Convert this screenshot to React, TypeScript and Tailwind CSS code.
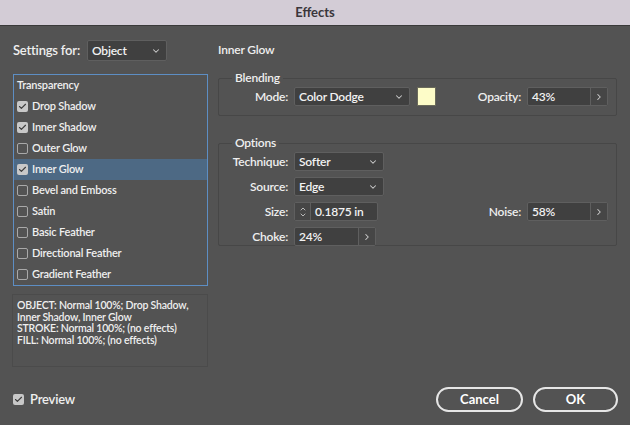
import { ChevronDown, ChevronRight, ChevronUp, Check } from 'lucide-react';

const F = { fontFamily: '"Lato", "Open Sans", sans-serif' };

const effects = [
  { name: 'Drop Shadow', on: true },
  { name: 'Inner Shadow', on: true },
  { name: 'Outer Glow', on: false },
  { name: 'Inner Glow', on: true, sel: true },
  { name: 'Bevel and Emboss', on: false },
  { name: 'Satin', on: false },
  { name: 'Basic Feather', on: false },
  { name: 'Directional Feather', on: false },
  { name: 'Gradient Feather', on: false },
];

function Box({ on }: { on: boolean }) {
  return on ? (
    <span className="w-[11px] h-[11px] rounded-[2px] bg-[#c8c8c8] flex items-center justify-center shrink-0">
      <Check size={9} strokeWidth={3} className="text-[#3c3c3c]" />
    </span>
  ) : (
    <span className="w-[11px] h-[11px] rounded-[2px] border border-[#a9a9a9] shrink-0" />
  );
}

function Select({ value, w, h = 'h-[19px]' }: { value: string; w: string; h?: string }) {
  return (
    <div className={`${w} ${h} bg-[#404040] border border-[#5f5f5f] rounded-[2px] flex items-center justify-between pl-[4px] pr-[5px] text-[12px] text-[#f2f2f2]`}>
      <span>{value}</span>
      <ChevronDown size={10} strokeWidth={2.5} className="text-[#cfcfcf]" />
    </div>
  );
}

function Stepped({ value, w }: { value: string; w: string }) {
  return (
    <div className="h-[19px] flex border border-[#5f5f5f] rounded-[2px] bg-[#404040] text-[12px] text-[#f2f2f2]">
      <div className={`${w} flex items-center pl-[4px]`}>{value}</div>
      <div className="w-[17px] border-l border-[#5f5f5f] bg-[#464646] flex items-center justify-center">
        <ChevronRight size={10} strokeWidth={2.5} className="text-[#d0d0d0]" />
      </div>
    </div>
  );
}

function Label({ children }: { children: string }) {
  return <div className="w-[61px] text-right text-[12px] text-[#efefef] mr-[6px]">{children}</div>;
}

export default function App() {
  return (
    <div className="w-[630px] h-[425px] bg-[#535353] flex flex-col overflow-hidden font-semibold tracking-[-0.2px]" style={F}>
      <div className="h-[26px] bg-[#d3ccd6] border-b border-[#3a3a3a] flex items-center justify-center text-[13px] font-bold tracking-normal text-[#3a363b]">
        Effects
      </div>

      <div className="flex px-[10px] pt-[14px]">
        <div className="w-[208px] flex flex-col">
          <div className="h-[21px] flex items-center gap-[7px] pl-[3px] text-[13px] text-[#efefef]">
            <span>Settings for:</span>
            <Select value="Object" w="w-[80px]" h="h-[21px]" />
          </div>

          <div className="mt-[13px] ml-[3px] w-[195px] border border-[#5d8ec4] text-[11px] text-[#efefef]">
            <div className="h-[21px] flex items-center pl-[3px]">Transparency</div>
            {effects.map((e) => (
              <div
                key={e.name}
                className={`h-[21px] flex items-center gap-[4px] pl-[3px] ${e.sel ? 'bg-[#4d6984]' : ''}`}
              >
                <Box on={e.on} />
                <span>{e.name}</span>
              </div>
            ))}
          </div>

          <div className="mt-[8px] ml-[2px] w-[196px] h-[73px] border border-[#4b4b4b] px-[4px] pt-[5px] text-[10.5px] leading-[11.5px] text-[#efefef]">
            <div>OBJECT: Normal 100%; Drop Shadow,</div>
            <div>Inner Shadow, Inner Glow</div>
            <div>STROKE: Normal 100%; (no effects)</div>
            <div>FILL: Normal 100%; (no effects)</div>
          </div>
        </div>

        <div className="w-[399px] flex flex-col">
          <div className="h-[20px] flex items-center text-[12px] text-[#efefef]">Inner Glow</div>

          <fieldset className="mt-[9px] border border-[#474747] rounded-[2px] px-[8px] pb-[9px]">
            <legend className="ml-[5px] px-[3px] text-[12px] text-[#efefef]">Blending</legend>
            <div className="flex items-center">
              <Label>Mode:</Label>
              <Select value="Color Dodge" w="w-[116px]" />
              <div className="ml-[7px] w-[19px] h-[19px] bg-[#fdfcc8] border border-[#6a6a5a]" />
              <div className="ml-auto mr-[6px] text-[12px] text-[#efefef]">Opacity:</div>
              <Stepped value="43%" w="w-[62px]" />
            </div>
          </fieldset>

          <fieldset className="mt-[18px] h-[112px] border border-[#474747] rounded-[2px] px-[8px] pb-[8px]">
            <legend className="ml-[5px] px-[3px] text-[12px] text-[#efefef]">Options</legend>
            <div className="flex flex-col gap-[6px]">
              <div className="flex items-center">
                <Label>Technique:</Label>
                <Select value="Softer" w="w-[90px]" />
              </div>
              <div className="flex items-center">
                <Label>Source:</Label>
                <Select value="Edge" w="w-[90px]" />
              </div>
              <div className="flex items-center">
                <Label>Size:</Label>
                <div className="h-[19px] flex border border-[#5f5f5f] rounded-[2px] bg-[#404040] text-[12px] text-[#f2f2f2]">
                  <div className="w-[16px] border-r border-[#5f5f5f] bg-[#464646] flex flex-col items-center justify-center">
                    <ChevronUp size={8} strokeWidth={2.5} className="text-[#d0d0d0] -mb-[1px]" />
                    <ChevronDown size={8} strokeWidth={2.5} className="text-[#d0d0d0] -mt-[1px]" />
                  </div>
                  <div className="w-[66px] flex items-center pl-[4px]">0.1875 in</div>
                </div>
                <div className="ml-auto mr-[6px] text-[12px] text-[#efefef]">Noise:</div>
                <Stepped value="58%" w="w-[62px]" />
              </div>
              <div className="flex items-center">
                <Label>Choke:</Label>
                <Stepped value="24%" w="w-[63px]" />
              </div>
            </div>
          </fieldset>
        </div>
      </div>

      <div className="mt-auto mb-[13px] h-[25px] flex items-center justify-between pl-[13px] pr-[12px]">
        <div className="flex items-center gap-[6px] text-[13px] text-[#efefef]">
          <Box on={true} />
          <span>Preview</span>
        </div>
        <div className="flex gap-[10px]">
          <button className="w-[87px] h-[25px] rounded-full border-2 border-[#e6e6e6] text-[13px] font-bold tracking-normal text-white">
            Cancel
          </button>
          <button className="w-[85px] h-[25px] rounded-full border-2 border-[#e6e6e6] text-[13px] font-bold tracking-normal text-white">
            OK
          </button>
        </div>
      </div>
    </div>
  );
}
